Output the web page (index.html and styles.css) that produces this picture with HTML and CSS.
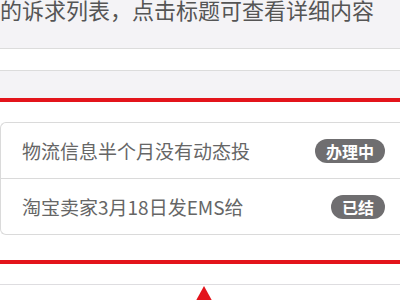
FILE: index.html
```html
<!DOCTYPE html>
<html>
<head>
<meta charset="utf-8">
<link rel="stylesheet" href="styles.css">
</head>
<body>
<div class="hint">的诉求列表，点击标题可查看详细内容</div>
<div class="band"></div>
<div class="gap"></div>
<div class="panel">
  <div class="card">
    <div class="row"><span class="title">物流信息半个月没有动态投</span><span class="badge">办理中</span></div>
    <div class="row"><span class="title">淘宝卖家3月18日发EMS给</span><span class="badge">已结</span></div>
  </div>
</div>
<div class="footer">
  <div class="arrow"></div>
</div>
</body>
</html>
```
FILE: styles.css
```css
html, body {
  margin: 0;
  padding: 0;
  width: 400px;
  height: 300px;
  overflow: hidden;
  background: #fff;
  font-family: "Noto Sans CJK SC", "Noto Sans", sans-serif;
}
.hint {
  height: 48px;
  background: #f4f3f6;
  color: #555;
  font-size: 22px;
  line-height: 18px;
  white-space: nowrap;
}
.band {
  height: 21px;
  background: #fff;
  border-top: 1px solid #dcdcdc;
  border-bottom: 1px solid #dcdcdc;
}
.gap {
  height: 27px;
  background: #f4f3f6;
}
.panel {
  border-top: 4px solid #e3141b;
  border-bottom: 4px solid #e3141b;
  padding: 20px 0 25px 0;
  background: #fff;
}
.card {
  border: 1px solid #dadada;
  border-right: none;
  border-radius: 6px 0 0 6px;
  background: #fff;
}
.row {
  height: 55px;
  display: flex;
  align-items: center;
  justify-content: space-between;
  padding: 0 15px 0 21px;
}
.row + .row {
  border-top: 1px solid #dadada;
}
.title {
  font-size: 19px;
  color: #666;
  white-space: nowrap;
}
.badge {
  height: 24px;
  line-height: 24px;
  padding: 0 11px;
  border-radius: 12px;
  background: #6f6e70;
  color: #fff;
  font-size: 16px;
  font-weight: bold;
}
.footer {
  margin-top: 20px;
  border-top: 1px solid #dedde0;
  height: 20px;
  padding-top: 1px;
}
.arrow {
  width: 0;
  height: 0;
  margin-left: 193px;
  border-left: 11px solid transparent;
  border-right: 11px solid transparent;
  border-bottom: 20px solid #e3141b;
}
```
